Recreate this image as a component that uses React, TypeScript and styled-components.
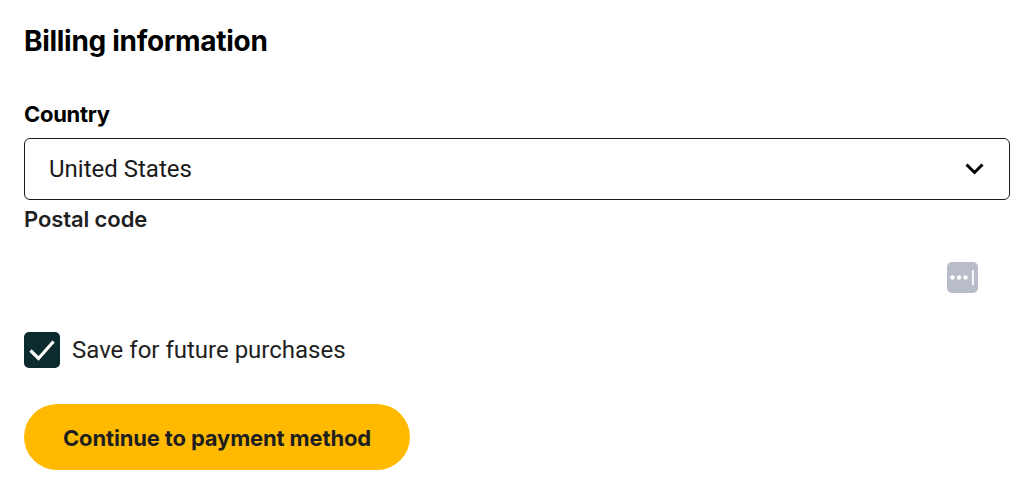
import React from "react";
import styled, { createGlobalStyle } from "styled-components";

const Global = createGlobalStyle`
  html, body { margin: 0; padding: 0; background: #fff; }
  body { font-family: Roboto, "Liberation Sans", sans-serif; }
`;

const Page = styled.form`
  display: flex;
  flex-direction: column;
  align-items: flex-start;
  width: 986px;
  padding: 25px 0 0 24px;
`;

const Heading = styled.h2`
  margin: 0 0 45px;
  height: 32px;
  font: 700 28px/32px Inter, Roboto, sans-serif;
  letter-spacing: -0.3px;
  color: #000;
`;

const Label = styled.label<{ $soft?: boolean }>`
  display: block;
  height: 24px;
  font: ${(p) => (p.$soft ? 600 : 700)} 22px/24px Inter, Roboto, sans-serif;
  letter-spacing: ${(p) => (p.$soft ? "-0.1px" : "-0.3px")};
  color: ${(p) => (p.$soft ? "#1f1f1f" : "#000")};
`;

const SelectBox = styled.div`
  box-sizing: border-box;
  display: flex;
  align-items: center;
  justify-content: space-between;
  width: 100%;
  height: 62px;
  margin: 12px 0 7px;
  padding: 0 25px 0 24px;
  border: 1px solid #1a1a1a;
  border-radius: 6px;
  font-size: 24px;
  color: #1a1a1a;
`;

const PostalField = styled.div`
  position: relative;
  width: 100%;
  height: 89px;
`;

const ManagerIcon = styled.svg`
  position: absolute;
  right: 32px;
  top: 31px;
  width: 31px;
  height: 31px;
`;

const CheckRow = styled.label`
  display: flex;
  align-items: center;
  gap: 12px;
  margin-top: 12px;
  font-size: 24px;
  line-height: 36px;
  color: #1f1f1f;
`;

const CheckBox = styled.span`
  display: flex;
  align-items: center;
  justify-content: center;
  width: 36px;
  height: 36px;
  border-radius: 5px;
  background: #0b2b2e;
`;

const Submit = styled.button`
  width: 386px;
  height: 66px;
  margin-top: 36px;
  padding: 2px 0 0;
  border: 0;
  border-radius: 33px;
  background: #ffba00;
  font: 700 22px/26px Inter, Roboto, sans-serif;
  letter-spacing: -0.15px;
  color: #1f1f1f;
`;

export default function App() {
  return (
    <>
      <Global />
      <Page>
        <Heading>Billing information</Heading>
        <Label>Country</Label>
        <SelectBox>
          United States
          <svg width="19" height="12" viewBox="0 0 19 12" fill="none">
            <path d="M1.5 1.5 9.5 9.5l8-8" stroke="#000" strokeWidth="3" />
          </svg>
        </SelectBox>
        <Label $soft>Postal code</Label>
        <PostalField>
          <ManagerIcon viewBox="0 0 31 31">
            <rect width="31" height="31" rx="5" fill="#b8bdc9" />
            <circle cx="5.5" cy="15.5" r="2.2" fill="#fff" />
            <circle cx="12" cy="15.5" r="2.2" fill="#fff" />
            <circle cx="18.5" cy="15.5" r="2.2" fill="#fff" />
            <rect x="25" y="8" width="1.8" height="15" fill="#fff" />
          </ManagerIcon>
        </PostalField>
        <CheckRow>
          <CheckBox>
            <svg width="26" height="22" viewBox="0 0 26 22" fill="none">
              <path d="M1.5 11.5 9.5 19.5 24.5 2.5" stroke="#fff" strokeWidth="3.2" />
            </svg>
          </CheckBox>
          Save for future purchases
        </CheckRow>
        <Submit type="button">Continue to payment method</Submit>
      </Page>
    </>
  );
}
